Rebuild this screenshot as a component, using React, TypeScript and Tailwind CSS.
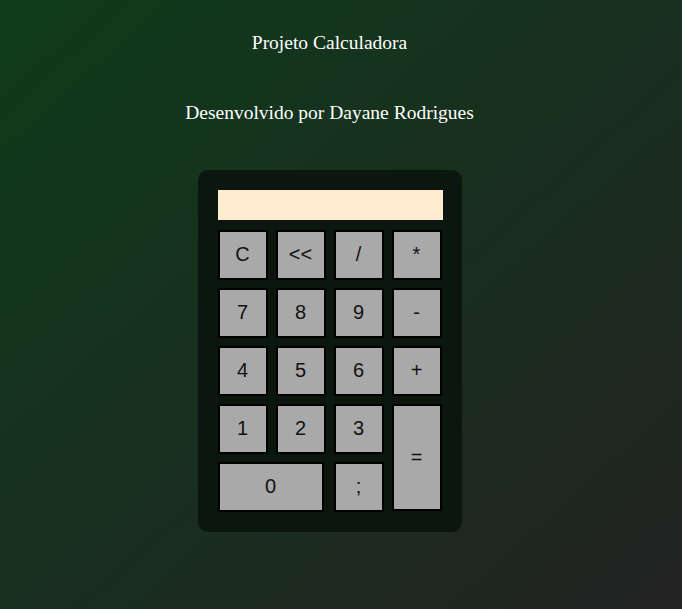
const KEYS: { label: string; cls?: string }[] = [
  { label: 'C' },
  { label: '<<' },
  { label: '/' },
  { label: '*' },
  { label: '7' },
  { label: '8' },
  { label: '9' },
  { label: '-' },
  { label: '4' },
  { label: '5' },
  { label: '6' },
  { label: '+' },
  { label: '1' },
  { label: '2' },
  { label: '3' },
  { label: '=', cls: 'row-span-2 h-[107px]' },
  { label: '0', cls: 'col-span-2 w-[106px]' },
  { label: ';' },
];

export default function App() {
  return (
    <div className="min-h-[609px] w-full pr-[23px] bg-[linear-gradient(to_bottom_right,#0e3b1a,#232323)] flex flex-col items-center text-white font-['Liberation_Serif',serif]">
      <p className="mt-[31px] text-[19.5px] leading-[24px]">Projeto Calculadora</p>
      <p className="mt-[46px] text-[19.5px] leading-[24px]">Desenvolvido por Dayane Rodrigues</p>
      <div className="mt-[45px] w-[264px] rounded-[10px] bg-[#0b160f] p-5">
        <div className="h-[30px] w-[225px] bg-[#ffecd0]" />
        <div className="mt-[10px] grid grid-cols-[repeat(4,50px)] auto-rows-[50px] gap-2">
          {KEYS.map((k) => (
            <button
              key={k.label}
              className={`border-2 border-black bg-[#a9a9a9] pb-[2px] text-[20px] text-[#111] font-['Liberation_Sans',Arial,sans-serif] flex items-center justify-center ${k.cls ?? ''}`}
            >
              {k.label}
            </button>
          ))}
        </div>
      </div>
    </div>
  );
}
